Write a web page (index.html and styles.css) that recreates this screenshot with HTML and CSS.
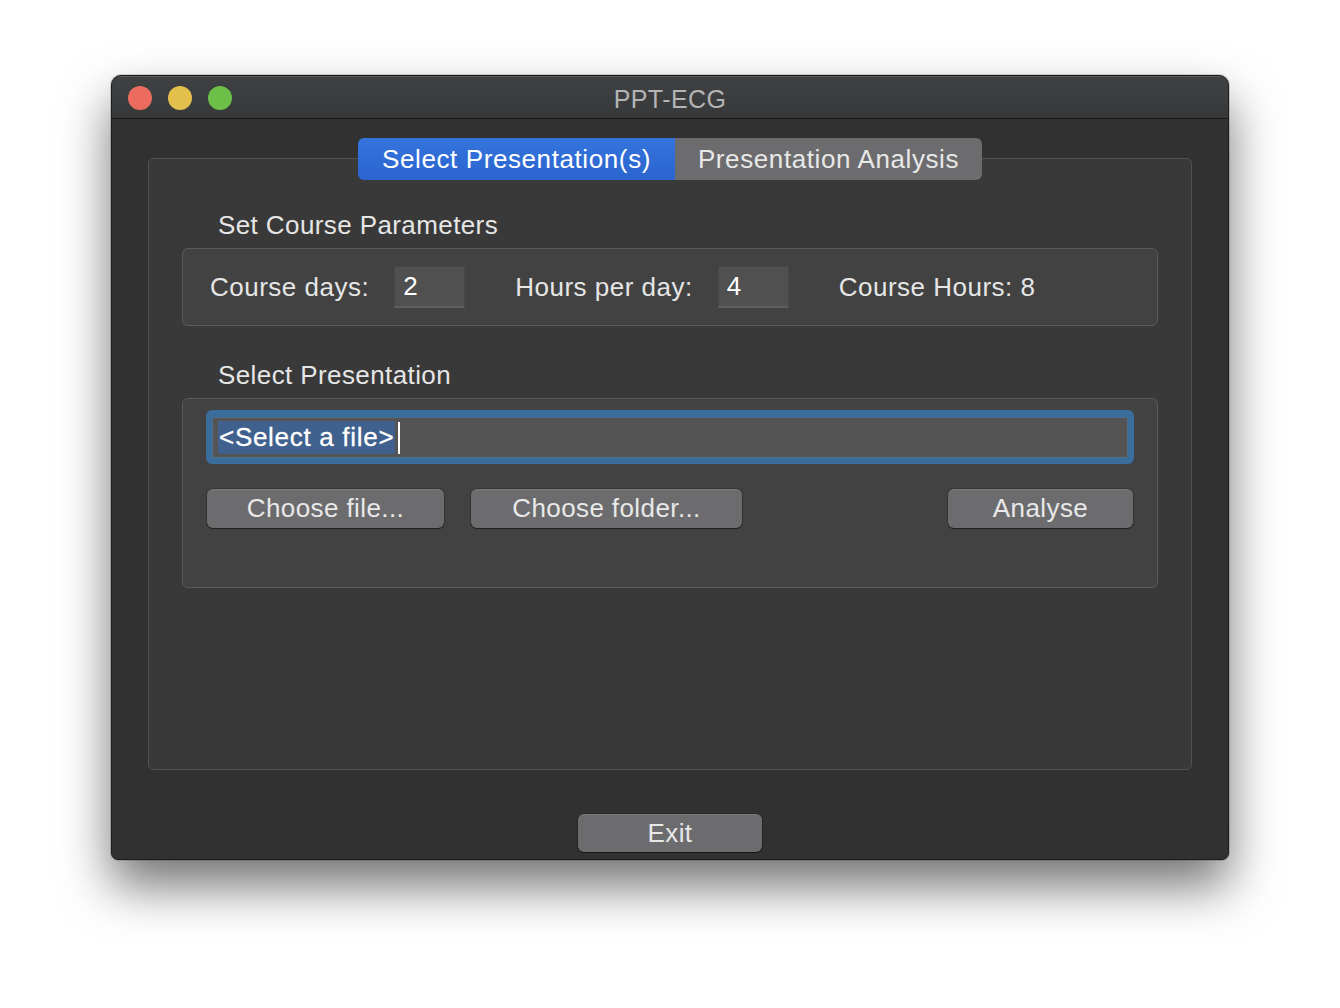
FILE: index.html
```html
<!DOCTYPE html>
<html>
<head>
<meta charset="utf-8">
<link rel="stylesheet" href="styles.css">
</head>
<body>
<div class="stage">
  <div class="window">
    <div class="titlebar">
      <div class="lights">
        <span class="light red"></span>
        <span class="light yellow"></span>
        <span class="light green"></span>
      </div>
      <div class="title">PPT-ECG</div>
    </div>
    <div class="content">
      <div class="tabs">
        <div class="tab active">Select Presentation(s)</div>
        <div class="tab">Presentation Analysis</div>
      </div>
      <div class="frame">
        <div class="group-label">Set Course Parameters</div>
        <div class="group params">
          <span class="lbl">Course days:</span>
          <span class="spin">2</span>
          <span class="lbl gap">Hours per day:</span>
          <span class="spin">4</span>
          <span class="lbl gap">Course Hours: 8</span>
        </div>
        <div class="group-label second">Select Presentation</div>
        <div class="group pres">
          <div class="ring">
            <div class="field"><span class="sel">&lt;Select a file&gt;</span><span class="caret"></span></div>
          </div>
          <div class="btnrow">
            <div class="btn b-file">Choose file...</div>
            <div class="btn b-folder">Choose folder...</div>
            <div class="spacer"></div>
            <div class="btn b-analyse">Analyse</div>
          </div>
        </div>
      </div>
      <div class="bottom">
        <div class="btn b-exit">Exit</div>
      </div>
    </div>
  </div>
</div>
</body>
</html>
```

FILE: styles.css
```css
html, body {
  margin: 0;
  padding: 0;
  background: #ffffff;
  font-family: "Liberation Sans", Arial, sans-serif;
}
.stage {
  width: 1340px;
  height: 1008px;
  padding: 75px 0 0 111px;
  box-sizing: border-box;
}
.window {
  width: 1118px;
  height: 785px;
  box-sizing: border-box;
  border: 1px solid #1c1c1c;
  border-radius: 10px 10px 7px 7px;
  background: #313131;
  box-shadow: 0 26px 50px rgba(0,0,0,0.55), 0 0 0 1px rgba(0,0,0,0.15);
  display: flex;
  flex-direction: column;
  overflow: hidden;
}
.titlebar {
  height: 43px;
  flex: none;
  background: linear-gradient(#404143, #37383a);
  border-bottom: 1px solid #1a1a1a;
  border-top: 1px solid #5a5b5d;
  box-sizing: border-box;
  display: flex;
  align-items: center;
  position: relative;
}
.lights {
  display: flex;
  gap: 16px;
  padding-left: 16px;
}
.light {
  width: 24px;
  height: 24px;
  border-radius: 50%;
  display: block;
}
.red { background: #ed6a5e; }
.yellow { background: #e2c04b; }
.green { background: #6dbf48; }
.title {
  position: absolute;
  left: 0;
  right: 0;
  top: 8px;
  text-align: center;
  color: #b4b4b4;
  font-size: 25px;
  line-height: 28px;
  letter-spacing: 0.4px;
}
.content {
  flex: 1;
  display: flex;
  flex-direction: column;
  padding: 19px 36px 0 36px;
}
.tabs {
  display: flex;
  justify-content: center;
  height: 42px;
  margin-bottom: -22px;
  position: relative;
  z-index: 2;
}
.tab {
  height: 42px;
  line-height: 42px;
  font-size: 26px;
  letter-spacing: 0.6px;
  color: #e8e8e8;
  background: #6c6c6e;
  box-sizing: border-box;
  text-align: center;
}
.tab.active {
  width: 317px;
  background: linear-gradient(#3473dd, #2b65cf);
  color: #ffffff;
  border-radius: 6px 0 0 6px;
}
.tab:not(.active) {
  width: 307px;
  border-radius: 0 6px 6px 0;
}
.frame {
  height: 612px;
  box-sizing: border-box;
  border: 1px solid #505050;
  border-radius: 5px;
  background: #393939;
  padding: 51px 33px 0 33px;
}
.group-label {
  font-size: 26px;
  line-height: 30px;
  letter-spacing: 0.4px;
  color: #e6e6e6;
  padding-left: 36px;
  margin-bottom: 8px;
}
.group-label.second {
  margin-top: 34px;
}
.group {
  border: 1px solid #5a5a5a;
  border-radius: 6px;
  background: #424242;
  box-sizing: border-box;
}
.params {
  height: 78px;
  display: flex;
  align-items: center;
  padding-left: 27px;
}
.lbl {
  font-size: 26px;
  letter-spacing: 0.5px;
  color: #e6e6e6;
  margin-right: 25px;
}
.lbl.gap {
  margin-left: 50px;
}
.spin {
  width: 71px;
  height: 42px;
  box-sizing: border-box;
  background: #505050;
  border: 1px solid #474747;
  border-bottom: 2px solid #5e5e5e;
  color: #ffffff;
  font-size: 26px;
  line-height: 38px;
  padding-left: 8px;
}
.pres {
  height: 190px;
  padding: 11px 23px 0 23px;
}
.ring {
  height: 54px;
  box-sizing: border-box;
  border: 4px solid #3a6d9c;
  border-radius: 6px;
  background: #3a6d9c;
  padding: 3px 2px 2px 2px;
}
.field {
  height: 100%;
  box-sizing: border-box;
  background: #545454;
  border: 1px solid #4e6e8e;
  display: flex;
  align-items: center;
  padding-left: 5px;
}
.sel {
  background: #40608d;
  color: #ffffff;
  font-size: 26px;
  line-height: 33px;
  letter-spacing: 0.7px;
  padding: 0 1px;
  -webkit-text-stroke: 0.3px #ffffff;
}
.caret {
  width: 2px;
  height: 32px;
  background: #ffffff;
  margin-left: 3px;
}
.btnrow {
  display: flex;
  margin-top: 25px;
}
.spacer { flex: 1; }
.btn {
  height: 39px;
  box-sizing: border-box;
  background: #6c6c6e;
  border-top: 1px solid #7a7a7c;
  border-radius: 6px;
  box-shadow: 0 1px 1px rgba(0,0,0,0.45), 0 0 0 1px rgba(0,0,0,0.18);
  color: #e8e8e8;
  font-size: 26px;
  letter-spacing: 0.4px;
  line-height: 37px;
  text-align: center;
}
.b-file { width: 237px; margin-left: 1px; }
.b-folder { width: 271px; margin-left: 27px; }
.b-analyse { width: 185px; margin-right: 1px; }
.bottom {
  display: flex;
  justify-content: center;
  padding-top: 44px;
}
.b-exit {
  width: 184px;
  height: 38px;
  line-height: 36px;
}
```
